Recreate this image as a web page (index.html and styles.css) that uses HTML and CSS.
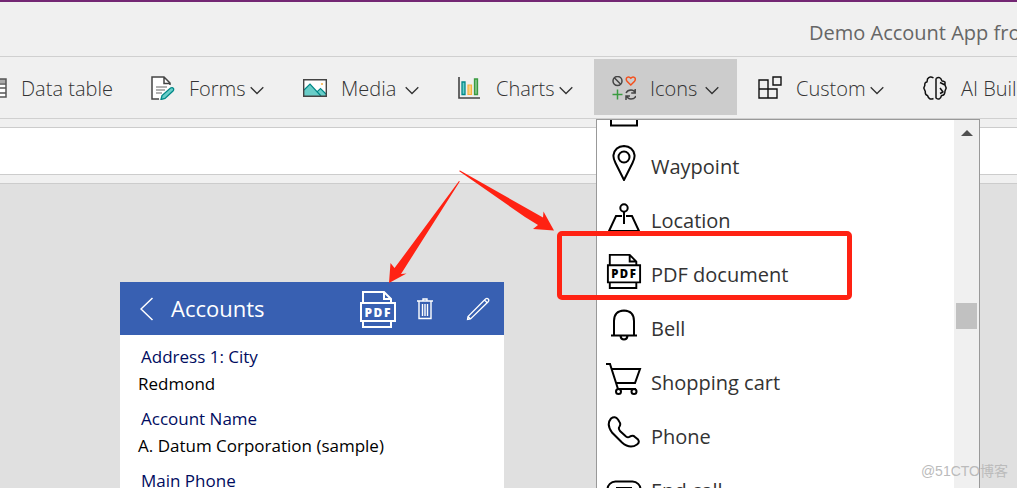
FILE: index.html
```html
<!DOCTYPE html>
<html lang="en">
<head>
<meta charset="utf-8">
<title>Demo Account App</title>
<link rel="stylesheet" href="styles.css">
</head>
<body>
<svg class="defs" aria-hidden="true">
  <symbol id="chevron" viewBox="0 0 14 9"><path d="M.7 1.200 7 7.500l6.300-6.300" fill="none" stroke="#333" stroke-width="1.300"/></symbol>
  <symbol id="pdf" viewBox="0 0 36 38">
    <g fill="none" stroke="currentColor" stroke-width="2">
      <path d="M3 13V2h21l7 7v4M24 2v7h7M3 31v6h28v-6"/>
      <path d="M1 13h34v18H1z"/>
    </g>
    <text class="pdf-text"><tspan x="4.500" y="26.500">P</tspan><tspan x="13.500">D</tspan><tspan x="24">F</tspan></text>
  </symbol>
</svg>
<div class="app">
  <header class="title-bar">Demo Account App from</header>
  <nav class="ribbon">
    <button class="tool">
      <svg class="tool-icon" viewBox="0 0 24 24"><path d="M1 3h22v18H1z" fill="#fff"/><path d="M1 3h22v4H1z" fill="#aaa"/><path d="M1 8h22M1 12h22M1 17h22M8 8v13M16 8v13M1 3h22v18H1z" fill="none" stroke="#555" stroke-width="1.500"/></svg>
      <span>Data table</span>
    </button>
    <button class="tool">
      <svg class="tool-icon" viewBox="0 0 24 24"><path d="M1 1h12l6 6v6l-9 10H1z" fill="#fff"/><path d="M8 23H1V1h12l6 6v2M13 1v6.500h6" fill="none" stroke="#444" stroke-width="1.500"/><path d="M5 11h11M5 14h9M5 17h6" stroke="#666" stroke-width="1.200"/><path d="m10 23.500 1-4 8.500-7.500q2-1 3 .5.500 1.500-.5 2.500L14 22.500z" fill="#69cdc8" stroke="#088" stroke-width="1.300"/></svg>
      <span>Forms</span><svg class="chevron"><use href="#chevron"/></svg>
    </button>
    <button class="tool">
      <svg class="tool-icon" viewBox="0 0 24 24"><path d="M.7 3.700h22.600v16.600H.7z" fill="#fff"/><path d="M1 14 7 8l11 12H1z" fill="#69cdc8"/><path d="m14 17 3.500-4L23 18v2h-7z" fill="#69cdc8"/><path d="m1 14 6-6 11 12m-4-4 3.500-3.500L23 18" fill="none" stroke="#088" stroke-width="1.200"/><circle cx="19" cy="8" r="1.100" fill="#f9b54c"/><path d="M.7 3.700h22.600v16.600H.7z" fill="none" stroke="#444" stroke-width="1.400"/></svg>
      <span>Media</span><svg class="chevron"><use href="#chevron"/></svg>
    </button>
    <button class="tool">
      <svg class="tool-icon" viewBox="0 0 24 24"><path d="M1 1v21h21" fill="none" stroke="#444" stroke-width="1.600"/><path d="M4 6h3v12.500H4z" fill="#69cdc8" stroke="#088" stroke-width="1.300"/><path d="M10 9h3.500v9.500H10z" fill="#fad284" stroke="#f9b13c" stroke-width="1.200"/><path d="M16.500 3h3v15.500h-3z" fill="#86c58a" stroke="#3a9b40" stroke-width="1.300"/></svg>
      <span>Charts</span><svg class="chevron"><use href="#chevron"/></svg>
    </button>
    <button class="tool active" aria-expanded="true">
      <svg class="tool-icon" viewBox="0 0 24 24" fill="none" stroke-width="1.500"><g stroke="#444"><circle cx="5.500" cy="5" r="4.500"/><path d="m2.300 1.800 6.400 6.400M14 17q1.500-3 5-3 3 0 4 2.500M23.200 13v4h-4M24 20q-1.500 3-5 3-3 0-4-2.500M14 24v-4h4"/></g><path d="M18.800 9 15 5.200Q13.500 3 15 1.500q2-1.400 3.800.7 1.800-2.100 3.800-.7 1.500 1.500 0 3.700z" stroke="#f4511e"/><path d="M5.500 13.500v10M.5 18.500h10" stroke="#3a9b40"/></svg>
      <span>Icons</span><svg class="chevron"><use href="#chevron"/></svg>
    </button>
    <button class="tool">
      <svg class="tool-icon" viewBox="0 0 24 24" fill="none" stroke="#111" stroke-width="1.400"><path d="M1 4h9v18H1zM1 13h18v9H1M15 1h8v8h-8z"/></svg>
      <span>Custom</span><svg class="chevron"><use href="#chevron"/></svg>
    </button>
    <button class="tool">
      <svg class="tool-icon" viewBox="0 0 24 24" fill="none" stroke="#111" stroke-width="1.500" stroke-linejoin="round"><path d="M10.500 2Q7-.5 4.500 3L4 6Q1.500 6 1.800 9.500L.8 12l1.500 3.500Q2 19 4.500 19.500 6 24.500 10.500 22.500M13 2.500v19.500q4 3 5.500-2.500 3.500 0 3.500-4.500l1.200-3L22 9V6q-1.500-1-3-1-2-5.500-6-2.500M17 6.500l5 2.500M17 12l3 4-3 1.500"/></svg>
      <span>AI Builder</span>
    </button>
  </nav>
  <div class="formula"><input class="formula-input" aria-label="Formula"></div>
  <main class="canvas">
    <section class="card">
      <header class="card-head">
        <button class="icon-button" aria-label="Back"><svg class="back-icon" viewBox="0 0 14 24"><path d="M12.500 1 1 12l11.500 11" fill="none" stroke="#fff" stroke-width="1.500"/></svg></button>
        <h1 class="card-title">Accounts</h1>
        <button class="icon-button" aria-label="PDF"><svg class="pdf-icon"><use href="#pdf"/></svg></button>
        <button class="icon-button delete" aria-label="Delete"><svg class="trash-icon" viewBox="0 0 18 22" fill="none" stroke="#fff" stroke-width="1.400"><path d="M1 3h16M7 3V1h4v2M3 3v17.500h12V3M6.500 6v12M9 6v12M11.500 6v12"/></svg></button>
        <button class="icon-button" aria-label="Edit"><svg class="pen-icon" viewBox="0 0 24 24" fill="none" stroke="#fff" stroke-width="1.300"><path d="m1.500 22.500.5-3L19.500 2q1.500-1.200 2.700 0t0 2.700L4.500 22zM18.500 3l2.700 2.700M2 19.500 4.500 22"/></svg></button>
      </header>
      <dl class="fields">
        <dt>Address 1: City</dt><dd>Redmond</dd>
        <dt>Account Name</dt><dd>A. Datum Corporation (sample)</dd>
        <dt>Main Phone</dt>
      </dl>
    </section>
  </main>
</div>

<div class="menu">
  <ul class="menu-list">
    <li><button class="menu-item" aria-label="More"><svg class="menu-icon" viewBox="0 0 36 36"><path d="M5 5v29.500h26V5" fill="none" stroke="#000" stroke-width="2"/></svg></button></li>
    <li><button class="menu-item"><svg class="menu-icon" viewBox="0 0 36 36"><path d="M18 35 9.500 18Q7 13 7.500 10 9 1.500 18 1q9 .5 10.500 9 .5 3-2 8z"/><circle cx="18" cy="12" r="5.500"/></svg>Waypoint</button></li>
    <li><button class="menu-item"><svg class="menu-icon" viewBox="0 0 36 36"><circle cx="18" cy="9" r="3.700"/><path d="M18 13v12M16 17H10L3 32h30l-7-15h-6"/></svg>Location</button></li>
    <li><button class="menu-item"><svg class="menu-icon pdf-menu"><use href="#pdf"/></svg>PDF document</button></li>
    <li><button class="menu-item"><svg class="menu-icon" viewBox="0 0 36 36"><path d="M8 28V14Q8 4 18 3.500 28 4 28 14v14M5 28.500h26M14.500 29q.5 3.500 3.500 3.500t3.500-3.500"/></svg>Bell</button></li>
    <li><button class="menu-item"><svg class="menu-icon" viewBox="0 0 36 36"><path d="M0 3h4l8 25h18M6 8h28l-5 14H10"/><circle cx="12.500" cy="30.500" r="2.500"/><circle cx="28" cy="30.500" r="2.500"/></svg>Shopping cart</button></li>
    <li><button class="menu-item"><svg class="menu-icon" viewBox="0 0 36 36"><path d="M5 3.500q4-3 7 1L13.500 7q1.500 2 0 4.500-1.500 2 .5 4.500l6 5.500q2 1.500 4 0 3-1.500 5 .5l3 2.500q2 3-1 5-7 5-15-2L6 17.500Q0 9.500 5 3.500z"/></svg>Phone</button></li>
    <li><button class="menu-item"><svg class="menu-icon" viewBox="0 0 36 36"><rect x="1.500" y="12.500" width="33" height="20" rx="8"/><path d="M11 23v-4h14v4"/></svg>End call</button></li>
  </ul>
  <div class="scrollbar"><svg class="scroll-up" viewBox="0 0 12 6"><path d="m6 0 6 6H0z" fill="#505050"/></svg><div class="thumb"></div></div>
</div>

<div class="highlight"></div>
<svg class="arrows" viewBox="0 0 1017 488" aria-hidden="true"><g fill="#ff2213"><path d="m459 171 1-.5 83 47 .5-6L554 230.500l-21-1.500 5-4-13-8z"/><path d="m459 181 .8.500L401 274l5.500-.5L389 283l1.500-20 4 5 9-12z"/></g></svg>
<div class="watermark">@51CTO博客</div>
</body>
</html>
```
FILE: styles.css
```css
* { box-sizing: border-box; }
body { margin: 0; height: 100vh; overflow: hidden; position: relative; font-family: "Open Sans", "Noto Sans CJK SC", sans-serif; background: #e0e0e0; }
button { margin: 0; padding: 0; border: 0; background: none; font: inherit; color: inherit; }
.defs { position: absolute; width: 0; height: 0; }
.app { display: flex; flex-direction: column; height: 100%; }
.title-bar { flex: none; height: 57px; border-top: 2px solid #742774; border-bottom: 1px solid #d0d0d0; background: #f0f0f0; padding-left: 809px; font-size: 20px; line-height: 62px; color: #666; white-space: nowrap; overflow: hidden; }
.ribbon { flex: none; display: grid; grid-template-columns: 130px 149px 152px 151px 143px 162px 160px; column-gap: 3px; height: 62px; padding: 2px 0 3px; border-bottom: 1px solid #d0d0d0; background: #f0f0f0; overflow: hidden; }
.tool { display: flex; align-items: center; padding: 2px 18px 0; font-size: 20px; font-weight: 300; color: #333; white-space: nowrap; }
.tool:first-child { margin-left: -35px; }
.tool.active { background: #ccc; }
.tool-icon { flex: none; width: 24px; height: 24px; margin-right: 14px; }
.chevron { flex: none; width: 14px; height: 9px; margin-left: auto; margin-top: 4px; }
.formula { flex: none; padding: 8px 0; border-bottom: 1px solid #ccc; background: #f0f0f0; }
.formula-input { display: block; width: 100%; height: 48px; border: solid #ccc; border-width: 1px 0; background: #fff; }
.canvas { flex: 1; min-height: 0; padding: 98px 0 0 120px; background: #e0e0e0; }
.card { width: 384px; height: 100%; background: #fff; overflow: hidden; }
.card-head { display: flex; align-items: center; height: 53px; padding: 0 14px 0 20px; background: #3860b2; color: #fff; }
.icon-button { display: flex; }
.card-title { margin: 0 auto 0 17px; font-size: 22px; line-height: 28px; font-weight: 400; padding-bottom: 2px; }
.back-icon { width: 14px; height: 24px; }
.pdf-icon { width: 36px; height: 38px; }
.trash-icon { width: 18px; height: 22px; }
.delete { margin: 0 32px 0 20px; }
.pen-icon { width: 24px; height: 24px; }
.pdf-text { font: 800 12px "Open Sans", sans-serif; fill: currentColor; }
.fields { margin: 0; padding: 8px 18px; font-size: 17px; line-height: 27px; color: #000; }
.fields dt { padding-left: 3px; color: #000c60; }
.fields dd { margin: 0 0 8px; }
.menu { position: absolute; top: 119px; bottom: 0; left: 596px; width: 384px; display: flex; border: solid #999; border-width: 1px 1px 0; background: #fff; overflow: hidden; }
.menu-list { flex: 1; height: 432px; margin: -35px 0 0; padding: 0; list-style: none; }
.menu-item { display: flex; align-items: center; width: 100%; height: 54px; padding-left: 9px; font-size: 20px; color: #333; }
.menu-icon { flex: none; width: 36px; height: 36px; margin: 0 9px 6px 0; fill: none; stroke: #000; stroke-width: 2; color: #000; }
.pdf-menu { stroke: none; }
.scrollbar { width: 25px; padding: 10px 2px; background: #f0f0f0; }
.scroll-up { display: block; width: 12px; height: 6px; margin: 0 auto; }
.thumb { height: 26px; margin-top: 167px; background: #c1c1c1; }
.highlight { position: absolute; top: 231px; left: 557px; width: 295px; height: 69px; border: 5px solid #ff2213; border-radius: 5px; }
.arrows { position: absolute; top: 0; left: 0; width: 1017px; height: 488px; pointer-events: none; }
.watermark { position: absolute; right: 9px; bottom: 7px; font: 14px/20px "Liberation Sans", "Noto Sans CJK SC", sans-serif; color: #bbb; }
```
